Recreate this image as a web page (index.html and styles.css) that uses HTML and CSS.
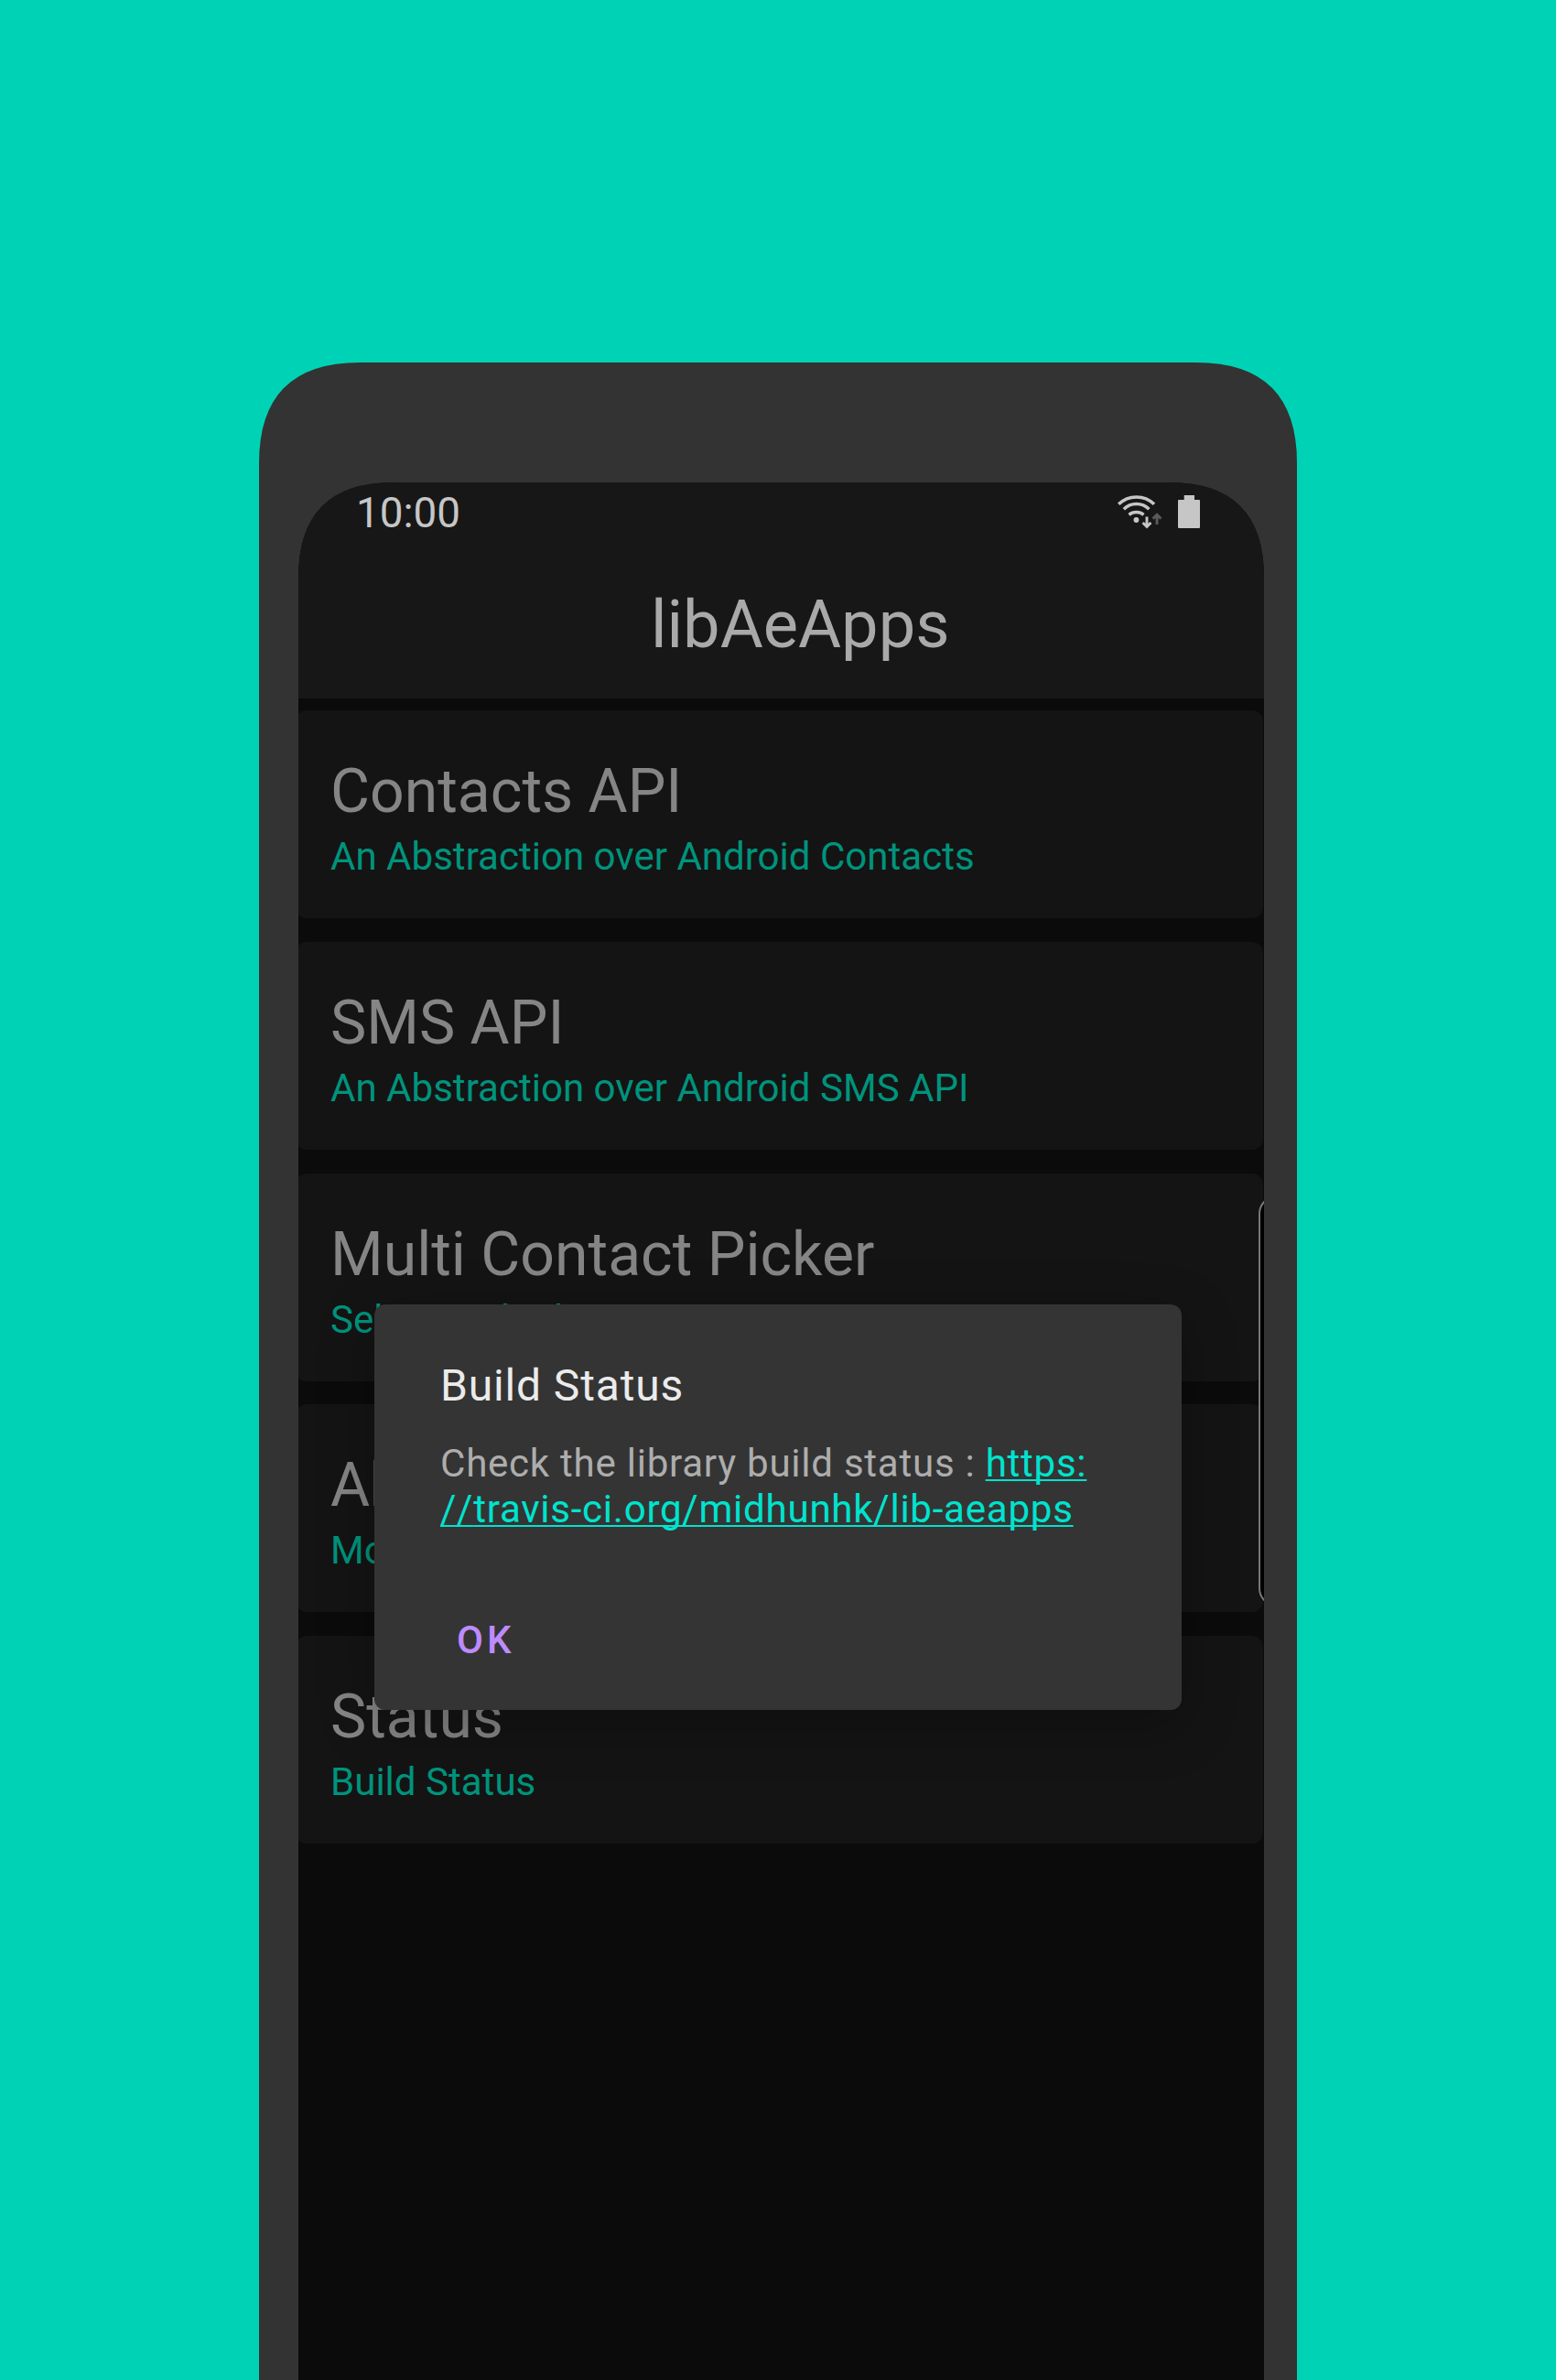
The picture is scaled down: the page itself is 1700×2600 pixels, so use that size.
FILE: index.html
```html
<!DOCTYPE html>
<html lang="en">
<head>
<meta charset="utf-8">
<title>libAeApps</title>
<link rel="stylesheet" href="styles.css">
</head>
<body>
<div class="phone">
  <div class="screen">
    <header class="app-header">
      <div class="status-bar">
        <span class="clock">10:00</span>
        <svg class="wifi" viewBox="0 0 50 40" aria-hidden="true">
          <g fill="none" stroke="#c6c6c6" stroke-width="3.5">
            <path d="M2.2 10.8A27.8 27.8 0 0 1 41 10.8"/>
            <path d="M7.8 16.3A19.6 19.6 0 0 1 35.4 16.3"/>
            <path d="M13.5 22.3A12.5 12.5 0 0 1 29.5 22.3"/>
            <path d="M33 24.6v10.6M28.6 31l4.4 4.4 4.4-4.4" stroke-width="2.9"/>
            <path d="M44 33V22.4M39.6 26.6l4.4-4.4 4.4 4.4" stroke="#5a5a5a" stroke-width="2.9"/>
          </g>
          <circle cx="21.4" cy="28" r="2.9" fill="#c6c6c6"/>
        </svg>
        <svg class="battery" viewBox="0 0 24 36" aria-hidden="true">
          <path fill="#c6c6c6" d="M6.7 0H18V5H23a1 1 0 0 1 1 1V35a1 1 0 0 1-1 1H1a1 1 0 0 1-1-1V6a1 1 0 0 1 1-1H6.7Z"/>
        </svg>
      </div>
      <h1 class="app-title">libAeApps</h1>
    </header>
    <main class="feature-list">
      <section class="card">
        <h2 class="card-title">Contacts API</h2>
        <p class="card-text">An Abstraction over Android Contacts</p>
      </section>
      <section class="card">
        <h2 class="card-title">SMS API</h2>
        <p class="card-text">An Abstraction over Android SMS API</p>
      </section>
      <section class="card">
        <h2 class="card-title">Multi Contact Picker</h2>
        <p class="card-text">Select multiple contacts</p>
      </section>
      <section class="card">
        <h2 class="card-title">About</h2>
        <p class="card-text">More about the library</p>
      </section>
      <section class="card">
        <h2 class="card-title">Status</h2>
        <p class="card-text">Build Status</p>
      </section>
    </main>
    <div class="edge-handle"></div>
    <div class="dialog" role="dialog">
      <h2 class="dialog-title">Build Status</h2>
      <p class="dialog-text">Check the library build status : <a class="link">https:<br><span class="slashes">//</span>travis-ci.org/midhunhk/lib-aeapps</a></p>
      <span class="dialog-button">OK</span>
    </div>
  </div>
</div>
</body>
</html>
```
FILE: styles.css
```css
* {
  box-sizing: border-box;
  margin: 0;
}

body {
  display: flex;
  justify-content: center;
  width: 1700px;
  height: 2600px;
  padding-top: 396px;
  overflow: hidden;
  background: #00d3b5;
  font-family: Roboto, sans-serif;
}

.phone {
  width: 1134px;
  height: 2204px;
  padding: 131px 36px 0 43px;
  background: #333;
  clip-path: path("M0 2204V110Q0 0 110 0H1024Q1134 0 1134 110V2204Z");
}

.screen {
  position: relative;
  width: 1055px;
  height: 2073px;
  overflow: hidden;
  background: #0b0b0b;
  clip-path: path("M0 2073V104Q0 0 104 0H951Q1055 0 1055 104V2073Z");
}

.app-header {
  height: 236px;
  background: #171717;
}

.status-bar {
  display: flex;
  align-items: flex-start;
  height: 66px;
  padding: 0 70px 0 63px;
}

.clock {
  margin-right: auto;
  padding-top: 4px;
  color: #c6c6c6;
  font-size: 45.8px;
  line-height: 60px;
}

.wifi {
  width: 50px;
  height: 40px;
  margin: 13px 17px 0 0;
}

.battery {
  width: 24px;
  height: 36px;
  margin-top: 14px;
}

.app-title {
  padding: 40px 0 0 385px;
  color: #a9a9a9;
  font-size: 72.2px;
  font-weight: 400;
  line-height: 100px;
}

.feature-list {
  display: flex;
  flex-direction: column;
  gap: 25.8px;
  padding-top: 13px;
}

.card {
  width: 1057px;
  height: 227px;
  margin-left: -3px;
  padding: 49px 0 0 38px;
  border-radius: 12px;
  background: #141414;
}

.card-title {
  color: #858585;
  font-size: 66.1px;
  font-weight: 400;
  line-height: 80px;
}

.card-text {
  color: #00937c;
  font-size: 42.07px;
  line-height: 61px;
}

/* Edge panel tab, cut off by the right side of the screen */
.edge-handle {
  position: absolute;
  top: 779px;
  left: 1048.5px;
  width: 60px;
  height: 449px;
  border: 2px solid #787878;
  border-radius: 20px;
  background: #000;
}

.dialog {
  position: absolute;
  top: 898px;
  left: 83px;
  width: 882px;
  height: 442.5px;
  padding: 59px 72px 0;
  border-radius: 12px;
  background: #343434;
  box-shadow: 0 16px 60px rgba(0, 0, 0, 0.28);
}

.dialog-title {
  color: #ebebeb;
  font-size: 48px;
  font-weight: 400;
  letter-spacing: 0.85px;
  line-height: 60px;
}

.dialog-text {
  padding-top: 30px;
  color: #adadad;
  font-size: 42.1px;
  letter-spacing: 0.73px;
  line-height: 49.6px;
  white-space: nowrap;
}

.link {
  color: #00e3ce;
  text-decoration: underline;
  text-decoration-skip-ink: none;
  text-decoration-thickness: 2px;
  text-underline-offset: 3px;
}

.slashes {
  font-kerning: none;
}

.dialog-button {
  display: block;
  padding: 89px 0 0 18px;
  color: #bd8bff;
  font-size: 42px;
  font-weight: 500;
  letter-spacing: 4px;
  line-height: 60px;
}
```
